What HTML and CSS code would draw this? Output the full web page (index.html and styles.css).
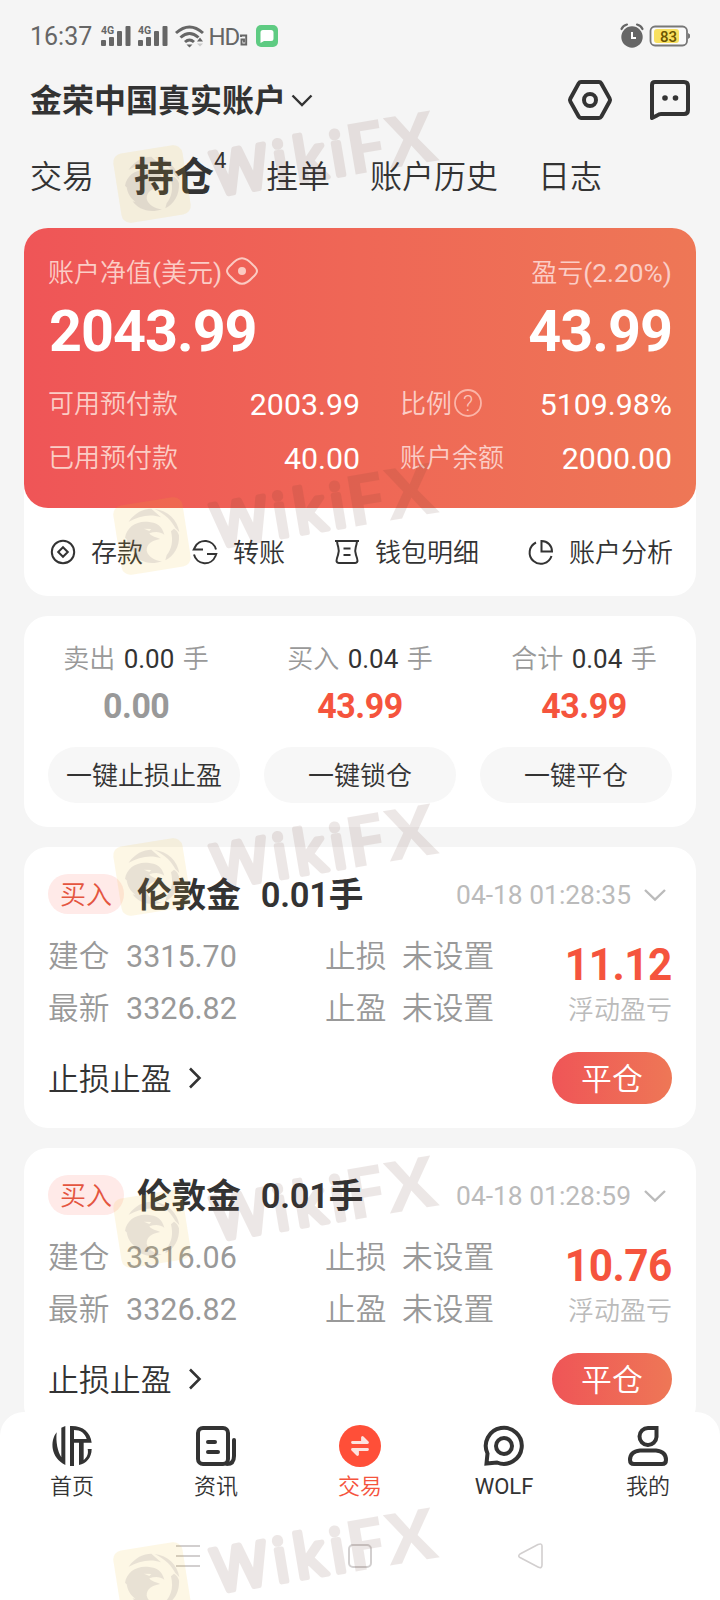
FILE: index.html
```html
<!DOCTYPE html>
<html lang="zh-CN">
<head>
<meta charset="utf-8">
<title>持仓</title>
<link rel="stylesheet" href="styles.css">
</head>
<body>
<div class="screen">
  <header class="status">
    <span class="clock">16:37</span>
    <svg class="signals" width="148" height="32" viewBox="0 -4 148 32" fill="#666">
      <g id="sig"><text x="0" y="9.500" class="fourg">4G</text><rect x="0" y="16" width="5" height="6" rx="1"/><rect x="8" y="13" width="5" height="9" rx="1"/><rect x="16" y="7" width="5" height="15" rx="1"/><rect x="24.500" y="2" width="5" height="20" rx="1"/></g>
      <use href="#sig" x="37"/>
      <g fill="none" stroke="#666" stroke-width="3"><path d="M75 9Q88.500-3 102 9M79.500 13.500Q88.500 5.500 97.500 13.500M84 18Q88.500 14 93 18"/></g>
      <path d="M85.500 20.500h6l-3 3zM96 17.500l3-4 3 4z"/><path d="M96 19.500h6l-3 3z" opacity=".3"/>
      <text x="107.500" y="21" class="hd">HD</text>
      <path d="M140 13V11.500h5.200v9H140.500V15.500h2.500v3" fill="none" stroke="#666" stroke-width="1.900"/>
    </svg>
    <svg class="msg" width="22" height="22" viewBox="0 0 22 22"><rect width="22" height="22" rx="5" fill="#5ecb82"/><path d="M7 5h8q2.500 0 2.500 2.500v6q0 2.500-2.500 2.500H8l-3.500 2V7.500Q4.500 5 7 5z" fill="#fff"/></svg>
    <svg class="power" width="72" height="30" viewBox="0 -2 72 30"><circle cx="12" cy="14" r="10.700" fill="#666"/><path d="M1.500 6Q3 2.500 7 1.500M22.500 6Q21 2.500 17 1.500" stroke="#666" stroke-width="2.200" fill="none" stroke-linecap="round"/><path d="M12 9v6h4" stroke="#fff" stroke-width="2" fill="none"/><rect x="30.500" y="3.500" width="36.500" height="19" rx="4.500" fill="#fafafa" stroke="#777" stroke-width="1.800"/><path d="M68 10l2 1.500v3L68 16z" fill="#777"/><rect x="34" y="6" width="25" height="14" rx="3" fill="#f8e060"/><text x="40" y="18.500" class="pct">83</text></svg>
  </header>

  <div class="title">
    <h1>金荣中国真实账户</h1>
    <svg class="down" width="22" height="13" viewBox="0 0 22 13"><path d="M1.500 1.500l9.500 9.500 9.500-9.500" fill="none" stroke="#333" stroke-width="2.400"/></svg>
    <svg class="tools" width="124" height="44" viewBox="0 0 124 44" fill="none" stroke="#333" stroke-width="4" stroke-linejoin="round"><path d="M13 4h18q1.500 0 2.300 1.400l8.300 15q.9 1.600 0 3.200l-8.300 15Q32.500 40 31 40H13q-1.500 0-2.300-1.400l-8.300-15q-.9-1.600 0-3.200l8.300-15Q11.500 4 13 4z"/><circle cx="22" cy="22" r="6"/><path d="M87 4h29q4 0 4 4v24q0 4-4 4H93q-2 0-4 1.500L84 40V7q0-3 3-3z"/><g fill="#333" stroke="none"><circle cx="97" cy="20" r="2.800"/><circle cx="107.500" cy="20" r="2.800"/></g></svg>
  </div>

  <nav class="tabs">
    <span>交易</span><span class="on">持仓<sup>4</sup></span><span>挂单</span><span>账户历史</span><span>日志</span>
  </nav>

  <main class="list">
    <section class="account">
      <div class="hero">
        <div class="line soft"><span class="with-icon"><span>账户净值<i>(</i>美元<i>)</i></span><svg width="32" height="28" viewBox="0 0 32 28" fill="none" stroke="#fbcac2" stroke-width="2"><path d="M1 14Q1 11.500 5 8Q11 1.200 16 1.200T27 8Q31 11.500 31 14T27 20Q21 26.800 16 26.800T5 20Q1 16.500 1 14z"/><circle cx="16" cy="14" r="4" fill="#fbcac2" stroke="none"/></svg></span><span>盈亏<i>(2.20%)</i></span></div>
        <div class="big"><b>2043.99</b><b>43.99</b></div>
        <div class="grid">
          <div class="cell"><span>可用预付款</span><em>2003.99</em></div>
          <div class="cell"><span class="with-icon tight">比例<svg width="28" height="28" viewBox="0 0 28 28"><circle cx="14" cy="14" r="13" fill="none" stroke="#fbb5a8" stroke-width="1.800"/><text x="14" y="21.500" class="help">?</text></svg></span><em>5109.98%</em></div>
          <div class="cell"><span>已用预付款</span><em>40.00</em></div>
          <div class="cell"><span>账户余额</span><em>2000.00</em></div>
        </div>
      </div>
      <div class="actions">
        <span><svg width="30" height="30" viewBox="0 0 30 30"><circle cx="15" cy="15" r="11.200"/><path d="M15 10.200l4.800 4.800-4.800 4.800-4.800-4.800z"/></svg>存款</span>
        <span><svg width="30" height="30" viewBox="0 0 30 30"><path d="M26 12.500A11.300 11.300 0 0 0 4.800 10.500L3.800 12.500H13M4 17.500A11.300 11.300 0 0 0 25.500 19L26.200 17H17"/></svg>转账</span>
        <span><svg width="30" height="30" viewBox="0 0 30 30"><path d="M3 4h24M5 4C5.500 11 8.500 12 6 18Q4.500 22 4.500 24Q5 26 7 26H23Q25 26 25.500 24Q25.500 22 24 18C21.500 12 24.500 11 25 4M11.500 11.500h7M11.500 18h7"/></svg>钱包明细</span>
        <span><svg width="30" height="30" viewBox="0 0 30 30"><path d="M10 5.500A11.200 11.200 0 1 0 25.500 19M15.500 4v10.500H26C26 8.500 21.500 4 15.500 4z"/></svg>账户分析</span>
      </div>
    </section>

    <section class="stats">
      <div class="stat"><p>卖出 <i>0.00</i> 手</p><b class="zero">0.00</b><button>一键止损止盈</button></div>
      <div class="stat"><p>买入 <i>0.04</i> 手</p><b>43.99</b><button>一键锁仓</button></div>
      <div class="stat"><p>合计 <i>0.04</i> 手</p><b>43.99</b><button>一键平仓</button></div>
    </section>

    <section class="order">
      <div class="head"><span class="tag">买入</span><strong>伦敦金</strong><strong class="lots"><i>0.01</i>手</strong><time>04-18 01:28:35</time><svg width="24" height="14" viewBox="0 0 24 14"><path d="M2 2l10 9.500L22 2" fill="none" stroke="#bbb" stroke-width="2.400"/></svg></div>
      <div class="info">
        <dl><dt>建仓</dt><dd>3315.70</dd><dt>止损</dt><dd class="zh">未设置</dd><dt>最新</dt><dd>3326.82</dd><dt>止盈</dt><dd class="zh">未设置</dd></dl>
        <div class="gain"><b>11.12</b><small>浮动盈亏</small></div>
      </div>
      <div class="foot"><span>止损止盈<svg width="14" height="24" viewBox="0 0 14 24"><path d="M2 2.500l9.500 9.500L2 21.500" fill="none" stroke="#333" stroke-width="2.600"/></svg></span><button class="close">平仓</button></div>
    </section>

    <section class="order">
      <div class="head"><span class="tag">买入</span><strong>伦敦金</strong><strong class="lots"><i>0.01</i>手</strong><time>04-18 01:28:59</time><svg width="24" height="14" viewBox="0 0 24 14"><path d="M2 2l10 9.500L22 2" fill="none" stroke="#bbb" stroke-width="2.400"/></svg></div>
      <div class="info">
        <dl><dt>建仓</dt><dd>3316.06</dd><dt>止损</dt><dd class="zh">未设置</dd><dt>最新</dt><dd>3326.82</dd><dt>止盈</dt><dd class="zh">未设置</dd></dl>
        <div class="gain"><b>10.76</b><small>浮动盈亏</small></div>
      </div>
      <div class="foot"><span>止损止盈<svg width="14" height="24" viewBox="0 0 14 24"><path d="M2 2.500l9.500 9.500L2 21.500" fill="none" stroke="#333" stroke-width="2.600"/></svg></span><button class="close">平仓</button></div>
    </section>
  </main>

  <footer class="bottom">
    <nav class="menu">
      <a><svg width="42" height="42" viewBox="-3 -3 126 126" fill="#333"><path d="M14 19C-7 45-4 96 40 117V0L28 5V94C17 76 11 48 14 19z"/><path d="M54 0C92-2 115 18 119 50H95V102C105 94 110 84 107 69H119C119 96 102 113 81 117V50H66V120H54zM66 12V39H104C99 22 86 12 66 12z"/></svg>首页</a>
      <a><svg width="42" height="42" viewBox="0 0 42 42" fill="none" stroke="#333" stroke-width="4" stroke-linecap="round"><rect x="3" y="3" width="30" height="36" rx="5"/><path d="M13 17h7M13 27h10"/><path d="M39 15v16q0 8-7 8"/></svg>资讯</a>
      <a class="on"><svg width="42" height="42" viewBox="0 0 42 42"><circle cx="21" cy="21" r="21" fill="#ff4f38"/><path d="M13.500 17.500H28.500L23.500 12.500V17.500M28.500 24.500H13.500L18.500 29.500V24.500" fill="#fde3df" stroke="#fde3df" stroke-width="2.800" stroke-linejoin="round" stroke-linecap="round"/></svg>交易</a>
      <a class="latin"><svg width="42" height="42" viewBox="0 0 42 42" fill="none" stroke="#333" stroke-width="4"><path d="M3.500 38.500L4.500 28.500A18 18 0 1 1 14 37.500z"/><circle cx="21" cy="21" r="8"/></svg>WOLF</a>
      <a><svg width="42" height="42" viewBox="0 0 42 42" fill="none" stroke="#333" stroke-width="4"><path d="M21 3h8.500v9A8.500 8.500 0 1 1 21 3z"/><path d="M13 25.500H29Q39 26.500 39 35 39 39 35 39H7Q3 39 3 35 3 26.500 13 25.500z"/></svg>我的</a>
    </nav>
    <svg class="system" width="384" height="28" viewBox="0 0 384 28" fill="none" stroke="#d2cfcf" stroke-width="2"><path d="M8 4h24M8 14h24M8 24h24"/><rect x="181" y="3" width="22" height="22" rx="4"/><path d="M352 12L370 2.500Q374 1 374 4V23Q374 27 370 25L352 15.500Q349.500 14 352 12z" stroke-width="1.600"/></svg>
  </footer>

  <svg class="overlay" width="720" height="1600" viewBox="0 0 720 1600">
    <g id="mark">
      <rect x="117" y="149" width="70" height="70" rx="9" fill="#f0c02c" opacity=".12" transform="rotate(-9 152 184)"/>
      <g opacity=".115" fill="#65372b" stroke="#65372b">
        <g stroke="none" fill="#50405a" transform="translate(152 184) scale(.333)">
          <path d="M-70-43C-52-70-25-82-2-82L27-56C-8-68-40-58-70-43z"/>
          <path d="M8-81C48-77 76-48 82-12L70-24C60-44 40-66 8-81z"/>
          <path d="M81-2C83 34 66 60 40 73L44 58C60 38 64 14 57-14L66-22C74-18 79-10 81-2z"/>
          <path d="M-81 5C-76-28-44-48-8-42C14-40 30-30 37-4C24-14 8-14-8-8C-2 2 14 4 24 9C0 14-16 22-16 44C-12 62 8 74 30 76C-8 90-44 74-58 52L-50 54C-68 40-74 24-76 10L-64 22zM-24-22L-2-21L-8-15z" fill-rule="evenodd"/>
        </g>
        <g transform="translate(220 198) rotate(-9.500)">
          <text class="mark-text" stroke-width="5.500" stroke-linejoin="round" x="-3" y="-3" textLength="134" lengthAdjust="spacing">Wiki</text>
          <text class="mark-text mark-bold" stroke="none" x="131" y="-1" textLength="92" lengthAdjust="spacingAndGlyphs">FX</text>
        </g>
      </g>
    </g>
    <use href="#mark" y="352"/>
    <use href="#mark" y="693"/>
    <use href="#mark" y="1045"/>
    <use href="#mark" y="1397"/>
  </svg>
</div>
</body>
</html>
```
FILE: styles.css
```css
* { box-sizing: border-box; margin: 0; padding: 0; }
body { width: 720px; height: 1600px; overflow: hidden; background: #f5f5f5; color: #333; font-family: Roboto, "Noto Sans CJK SC", sans-serif; font-weight: 350; }
.screen { position: relative; width: 720px; height: 1600px; overflow: hidden; display: flex; flex-direction: column; }
svg { flex: none; display: block; overflow: visible; }
i, em { font-style: normal; }
i, em, time, sup, dd, .latin { font-weight: 400; }
button { border: 0; font: inherit; color: inherit; }

.status { height: 72px; padding: 0 30px; display: flex; align-items: center; color: #666; }
.clock { font-size: 25px; line-height: 28px; width: 71px; font-weight: 400; padding-top: 2px; }
.fourg { font: bold 10.500px/11px Roboto, sans-serif; }
.hd { font: 24px Roboto, sans-serif; letter-spacing: -1px; }
.msg { margin-left: 7px; }
.power { margin-left: auto; margin-right: -2px; }
.pct { font: 500 15px Roboto, sans-serif; fill: #6b5400; }

.title { height: 56px; padding: 0 30px; display: flex; align-items: center; }
.title h1 { font-size: 32px; line-height: 40px; font-weight: 700; padding-top: 1px; }
.down { margin-left: 5px; }
.tools { margin-left: auto; margin-right: -2px; }

.tabs { height: 100px; padding: 0 30px 2px; display: flex; align-items: center; gap: 40px; font-size: 32px; line-height: 40px; }
.tabs .on { font-size: 40px; font-weight: 700; display: flex; padding-top: 1px; }
.tabs sup { font-size: 22px; font-weight: 400; line-height: 24px; width: 12px; margin-top: -9px; }

.list { flex: none; height: 1184px; padding: 0 24px; display: flex; flex-direction: column; gap: 20px; overflow: hidden; }
.list section { flex: none; background: #fff; border-radius: 24px; }
.account { height: 368px; }
.hero { height: 280px; padding: 22px 24px 0; border-radius: 24px; color: #fff; background: linear-gradient(90deg, #ef5557, #ef6756 50%, #ee7756); }
.line, .big, .cell { display: flex; justify-content: space-between; align-items: center; }
.line { height: 40px; font-size: 26px; color: #fbcdc6; }
.line i { font-size: 26.300px; }
.with-icon { display: flex; align-items: center; gap: 4px; }
.with-icon svg { margin-top: 2px; }
.tight { gap: 2px; }
.big { height: 76px; font-size: 57.500px; letter-spacing: -1px; line-height: 72px; padding: 8px 0 0 1px; }
.grid { display: grid; grid-template-columns: 312px 272px; column-gap: 40px; grid-auto-rows: 54px; padding-top: 10px; }
.cell > span { font-size: 26px; color: #fbcdc6; margin-top: -3px; }
.cell em { font-size: 30.300px; padding-top: 2px; }
.help { font: 300 22px Roboto, sans-serif; fill: #fbc5ba; text-anchor: middle; }
.actions { height: 88px; padding: 0 23px 3px 24px; display: flex; justify-content: space-between; align-items: center; font-size: 26px; }
.actions span { display: flex; align-items: center; gap: 13px; }
.actions svg { fill: none; stroke: #333; stroke-width: 2; position: relative; top: 1px; }

.stats { height: 211px; display: flex; padding-top: 23px; }
.stat { flex: 1; display: flex; flex-direction: column; align-items: center; }
.stat p { font-size: 26px; line-height: 40px; color: #999; word-spacing: 2px; }
.stat i { color: #333; }
.stat b { font-size: 35px; line-height: 54px; letter-spacing: -.5px; color: #f5543d; padding-top: 1px; transform: scaleX(.97); }
.stat .zero { color: #999; }
.stat button { width: 192px; height: 56px; margin-top: 13px; padding-bottom: 3px; border-radius: 28px; background: #f7f7f7; font-size: 26px; }
.stats .stat:first-child button { margin-left: 16px; }
.stats .stat:last-child button { margin-right: 16px; }

.order { height: 281px; padding: 24px 24px 0; }
.head { height: 46px; display: flex; align-items: center; }
.tag { width: 76px; height: 40px; line-height: 42px; border-radius: 20px; background: #ffeae8; color: #e4553f; font-size: 26px; text-align: center; }
.head strong { margin-left: 13px; font-size: 34.600px; line-height: 46px; padding-top: 2px; }
.head .lots { margin-left: 20px; }
.lots i { font-weight: 600; letter-spacing: -.3px; }
.head time { margin-left: auto; font-size: 26.400px; color: #bbb; padding-top: 2px; }
.head svg { margin: 2px 5px 0 12px; }
.info { display: flex; justify-content: space-between; padding-top: 14px; height: 116px; }
.info dl { display: grid; grid-template-columns: 78px 199px 77px 100px; grid-auto-rows: 52px; font-size: 30.700px; line-height: 52px; color: #999; white-space: nowrap; }
.info dd { font-size: 30.500px; }
.info .zh { font-size: 30.700px; font-weight: 350; }
.gain { text-align: right; display: flex; flex-direction: column; padding-top: 7px; }
.gain b { font-size: 45px; line-height: 54px; color: #f5543d; letter-spacing: -.5px; transform: scaleX(.94); transform-origin: right; }
.gain small { font-size: 26px; line-height: 36px; color: #bbb; }
.foot { display: flex; justify-content: space-between; align-items: center; height: 52px; margin-top: 19px; font-size: 30.900px; }
.foot span { display: flex; align-items: center; gap: 16px; padding-bottom: 3px; }
.foot span svg { position: relative; top: 1px; }
.close { width: 120px; height: 52px; padding-bottom: 3px; border-radius: 26px; color: #fff; background: linear-gradient(90deg, #ef5557, #ee7756); }

.bottom { flex: none; height: 188px; border-radius: 24px 24px 0 0; background: #fff; }
.menu { display: flex; padding-top: 13px; }
.menu a { width: 144px; display: flex; flex-direction: column; align-items: center; font-size: 22px; line-height: 32px; gap: 4px; }
.menu .on { color: #f5543d; }
.system { margin: 39px auto 0; }
.overlay { position: absolute; left: 0; top: 0; pointer-events: none; overflow: hidden; }
.mark-text { font: 400 60px "Open Sans", sans-serif; }
.mark-bold { font-weight: 700; font-size: 71px; }
```
